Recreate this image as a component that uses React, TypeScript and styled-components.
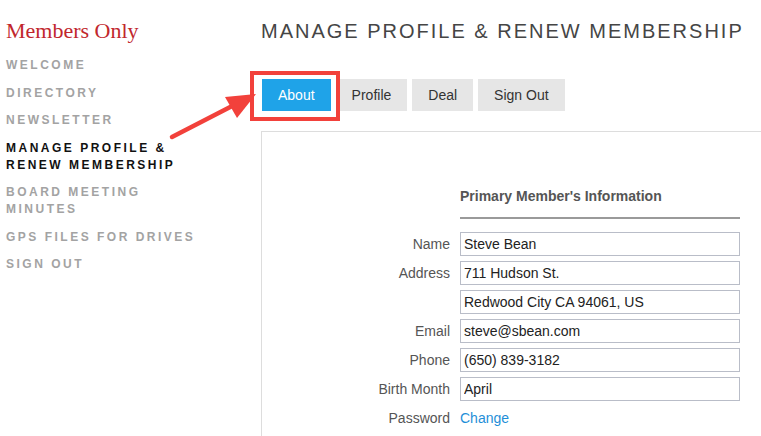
import React from "react";
import styled, { createGlobalStyle } from "styled-components";

const GlobalStyle = createGlobalStyle`
  html, body {
    margin: 0;
    padding: 0;
    background: #fff;
    overflow: hidden;
  }
  body {
    font-family: "Liberation Sans", Arial, sans-serif;
  }
`;

const navItems = [
  "WELCOME",
  "DIRECTORY",
  "NEWSLETTER",
  "MANAGE PROFILE & RENEW MEMBERSHIP",
  "BOARD MEETING MINUTES",
  "GPS FILES FOR DRIVES",
  "SIGN OUT",
];

const tabs = ["About", "Profile", "Deal", "Sign Out"];

const fields: { label: string; value: string }[] = [
  { label: "Name", value: "Steve Bean" },
  { label: "Address", value: "711 Hudson St." },
  { label: "", value: "Redwood City CA 94061, US" },
  { label: "Email", value: "steve@sbean.com" },
  { label: "Phone", value: "(650) 839-3182" },
  { label: "Birth Month", value: "April" },
];

const App = () => {
  return (
    <Page>
      <GlobalStyle />
      <Sidebar>
        <Brand>Members Only</Brand>
        <Nav>
          {navItems.map((item) => (
            <NavItem key={item} $active={item.startsWith("MANAGE")}>
              {item}
            </NavItem>
          ))}
        </Nav>
      </Sidebar>
      <Main>
        <Title>MANAGE PROFILE &amp; RENEW MEMBERSHIP</Title>
        <TabBar>
          {tabs.map((tab, i) => (
            <Tab key={tab} $active={i === 0}>
              {tab}
            </Tab>
          ))}
        </TabBar>
        <Panel>
          <Form>
            <SectionTitle>Primary Member's Information</SectionTitle>
            <Divider />
            {fields.map((f, i) => (
              <React.Fragment key={i}>
                <Label>{f.label}</Label>
                <Field defaultValue={f.value} />
              </React.Fragment>
            ))}
            <Label>Password</Label>
            <ChangeLink href="#">Change</ChangeLink>
          </Form>
        </Panel>
      </Main>

      <Highlight />
      <Arrow width="100" height="60" viewBox="0 0 100 60">
        <line x1="4" y1="45" x2="70" y2="11" stroke="#f2413b" strokeWidth="4.5" strokeLinecap="round" />
        <polygon points="88,2 57,5 69,26" fill="#f2413b" />
      </Arrow>
    </Page>
  );
};

export default App;

const Page = styled.div`
  position: relative;
  display: flex;
  width: 761px;
  height: 436px;
  overflow: hidden;
`;

const Sidebar = styled.aside`
  flex: 0 0 255px;
  padding: 18px 0 0 6px;
  box-sizing: border-box;
`;

const Brand = styled.div`
  font-family: "Liberation Serif", "Times New Roman", serif;
  font-size: 22px;
  line-height: 26px;
  color: #c1272d;
  margin-bottom: 13px;
`;

const Nav = styled.nav`
  display: flex;
  flex-direction: column;
  gap: 10.5px;
  width: 205px;
`;

const NavItem = styled.a<{ $active?: boolean }>`
  font-size: 12px;
  font-weight: 700;
  line-height: 17px;
  letter-spacing: 2.5px;
  color: ${(p) => (p.$active ? "#111" : "#a3a3a3")};
`;

const Main = styled.main`
  flex: 0 0 520px;
  padding-top: 19px;
  padding-left: 6px;
  box-sizing: border-box;
`;

const Title = styled.h1`
  margin: 0;
  font-size: 20px;
  font-weight: 400;
  line-height: 24px;
  letter-spacing: 2px;
  color: #454545;
`;

const TabBar = styled.div`
  display: flex;
  gap: 5px;
  margin-top: 36px;
  padding-left: 1px;
`;

const Tab = styled.button<{ $active?: boolean }>`
  height: 32px;
  padding: 0 16px;
  border: none;
  font-family: "Liberation Sans", Arial, sans-serif;
  font-size: 14px;
  color: ${(p) => (p.$active ? "#fff" : "#333")};
  background: ${(p) => (p.$active ? "#1fa3e8" : "#e6e6e6")};
`;

const Panel = styled.section`
  margin-top: 20px;
  border: 1px solid #dddddd;
  height: 400px;
`;

const Form = styled.div`
  display: grid;
  grid-template-columns: 188px 280px;
  column-gap: 10px;
  row-gap: 5px;
  align-items: center;
  padding-top: 56px;
`;

const SectionTitle = styled.div`
  grid-column: 2;
  font-size: 14px;
  font-weight: 700;
  line-height: 16px;
  color: #555;
`;

const Divider = styled.div`
  grid-column: 2;
  height: 2px;
  background: #9a9a9a;
  margin: 8px 0 8px;
`;

const Label = styled.div`
  grid-column: 1;
  text-align: right;
  font-size: 14px;
  line-height: 24px;
  color: #555;
`;

const Field = styled.input`
  grid-column: 2;
  height: 24px;
  box-sizing: border-box;
  border: 1px solid #b9bdc8;
  border-radius: 0;
  padding: 0 3px;
  font-family: "Liberation Sans", Arial, sans-serif;
  font-size: 14px;
  color: #222;
  outline: none;
`;

const ChangeLink = styled.a`
  grid-column: 2;
  font-size: 14px;
  line-height: 24px;
  color: #1f8fd8;
  text-decoration: none;
`;

const Highlight = styled.div`
  position: absolute;
  left: 250px;
  top: 71px;
  width: 90px;
  height: 50px;
  box-sizing: border-box;
  border: 4px solid #f2413b;
  pointer-events: none;
`;

const Arrow = styled.svg`
  position: absolute;
  left: 168px;
  top: 92px;
  pointer-events: none;
`;
